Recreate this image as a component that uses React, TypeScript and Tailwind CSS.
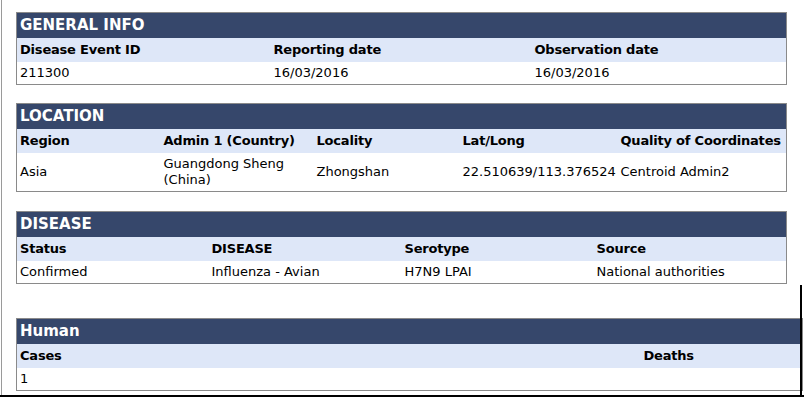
import React from 'react';

type Col = { label: string; width: string; value: React.ReactNode };

const Section: React.FC<{ title: string; cols: Col[]; valueRow?: string; className?: string }> = ({
  title,
  cols,
  valueRow = 'h-[23px]',
  className = 'w-[770px]',
}) => (
  <table className={`table-fixed border-collapse border border-[#8a8a8a] ${className}`}>
    <colgroup>
      {cols.map((c) => (
        <col key={c.label} className={c.width} />
      ))}
    </colgroup>
    <thead>
      <tr className="h-[25px] bg-[#36476b]">
        <th colSpan={cols.length} className="px-[3px] text-left align-middle text-[15px] leading-[18px] font-bold text-white">
          {title}
        </th>
      </tr>
      <tr className="h-[24px] bg-[#dee7f8]">
        {cols.map((c) => (
          <th
            key={c.label}
            className="overflow-visible whitespace-nowrap px-[3px] text-left align-middle text-[13px] leading-[16px] font-bold tracking-[-0.2px] text-black"
          >
            {c.label}
          </th>
        ))}
      </tr>
    </thead>
    <tbody>
      <tr className={`${valueRow} bg-white`}>
        {cols.map((c) => (
          <td key={c.label} className="px-[3px] align-middle text-[13px] leading-[16px] text-black">
            {c.value}
          </td>
        ))}
      </tr>
    </tbody>
  </table>
);

const App: React.FC = () => {
  return (
    <div
      className="relative h-[397px] w-[804px] overflow-hidden border-b-2 border-black bg-white"
      style={{ fontFamily: '"DejaVu Sans", Verdana, sans-serif' }}
    >
      <div className="ml-px flex h-full flex-col border-l border-[#9a9a9a] pl-[14px] pt-[12px]">
        {/* General info */}
        <Section
          title="GENERAL INFO"
          cols={[
            { label: 'Disease Event ID', width: 'w-[254px]', value: '211300' },
            { label: 'Reporting date', width: 'w-[261px]', value: '16/03/2016' },
            { label: 'Observation date', width: 'w-[255px]', value: '16/03/2016' },
          ]}
        />

        {/* Location */}
        <div className="mt-[18px]">
          <Section
            title="LOCATION"
            valueRow="h-[39px]"
            cols={[
              { label: 'Region', width: 'w-[144px]', value: 'Asia' },
              { label: 'Admin 1 (Country)', width: 'w-[153px]', value: 'Guangdong Sheng (China)' },
              { label: 'Locality', width: 'w-[146px]', value: 'Zhongshan' },
              { label: 'Lat/Long', width: 'w-[158px]', value: '22.510639/113.376524' },
              { label: 'Quality of Coordinates', width: 'w-[169px]', value: 'Centroid Admin2' },
            ]}
          />
        </div>

        {/* Disease */}
        <div className="mt-[19px]">
          <Section
            title="DISEASE"
            cols={[
              { label: 'Status', width: 'w-[192px]', value: 'Confirmed' },
              { label: 'DISEASE', width: 'w-[193px]', value: 'Influenza - Avian' },
              { label: 'Serotype', width: 'w-[192px]', value: 'H7N9 LPAI' },
              { label: 'Source', width: 'w-[193px]', value: 'National authorities' },
            ]}
          />
        </div>

        {/* Human */}
        <div className="mt-[34px]">
          <Section
            title="Human"
            className="w-[786px]"
            cols={[
              { label: 'Cases', width: 'w-[624px]', value: '1' },
              { label: 'Deaths', width: 'w-[162px]', value: '' },
            ]}
          />
        </div>
      </div>
      {/* window edge on the lower right */}
      <div className="absolute bottom-0 right-[2px] h-[110px] w-[2px] bg-black" />
    </div>
  );
};

export default App;
